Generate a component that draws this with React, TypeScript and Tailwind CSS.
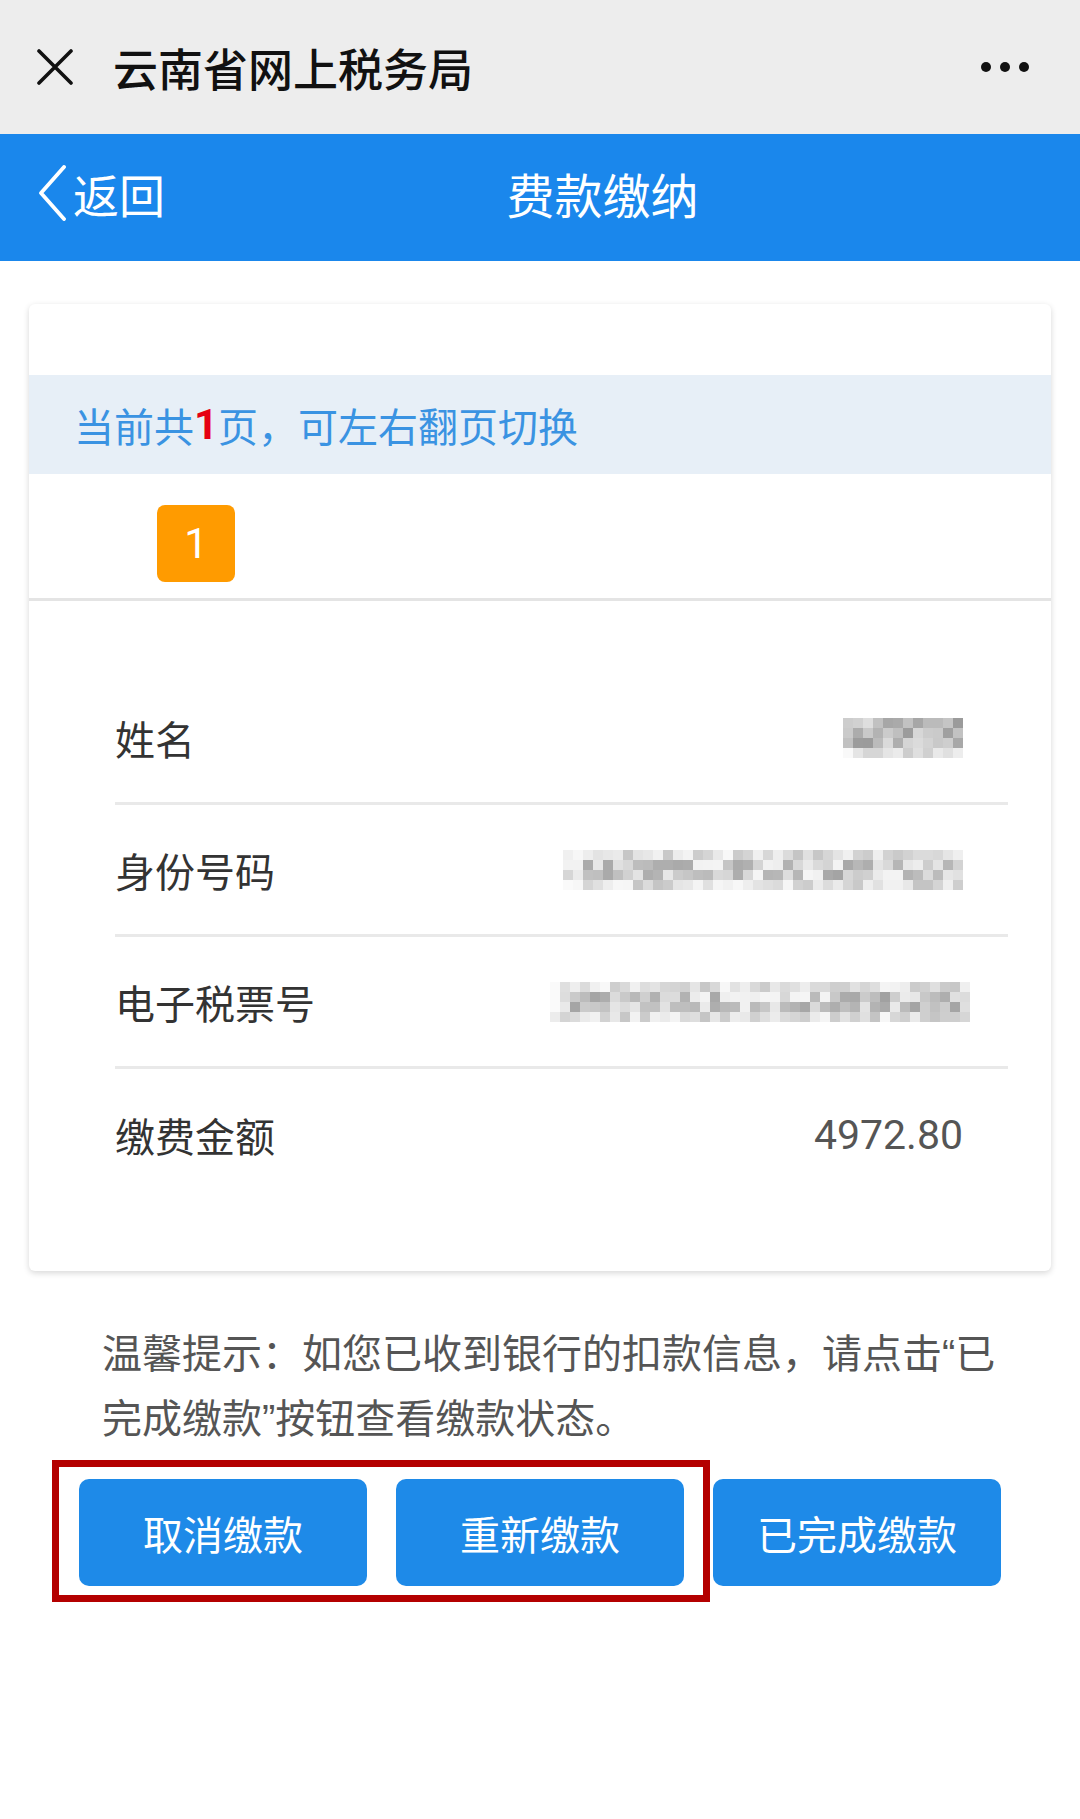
import React from "react";

function hash(i: number, j: number, s: number) {
  const x = Math.sin(i * 12.9898 + j * 78.233 + s * 37.719) * 43758.5453;
  return x - Math.floor(x);
}

function Mosaic({ cols, seed, dark }: { cols: number; seed: number; dark?: boolean }) {
  const rows = 4;
  const size = 10;
  const cells: React.ReactNode[] = [];
  for (let r = 0; r < rows; r++) {
    for (let c = 0; c < cols; c++) {
      const h = hash(c, r, seed);
      let g: number;
      if (dark) {
        if (r === 3) g = 200 + Math.round(h * 40);
        else g = 155 + Math.round(h * 70);
      } else {
        if (r === 0 || r === 3) g = 196 + Math.round(h * 52);
        else g = 160 + Math.round(h * 85);
      }
      if (c === 0) g = Math.min(250, g + 30);
      const col = `rgb(${g},${g},${g})`;
      cells.push(
        <rect key={`${r}-${c}`} x={c * size} y={r * size} width={size} height={size} fill={col} />
      );
    }
  }
  return (
    <svg width={cols * size} height={rows * size} viewBox={`0 0 ${cols * size} ${rows * size}`} className="block" style={{ filter: "blur(0.4px)" }}>
      {cells}
    </svg>
  );
}

function Row({ label, children, last }: { label: string; children: React.ReactNode; last?: boolean }) {
  return (
    <div
      className={
        "h-[132px] flex items-center justify-between pr-[45px] " +
        (last ? "" : "border-b-[3px] border-[#e9e9e9]")
      }
    >
      <div className="text-[40px] text-[#333333] leading-none">{label}</div>
      {children}
    </div>
  );
}

const Q = ({ c }: { c: string }) => (
  <span style={{ fontFamily: '"Liberation Sans", Arial, sans-serif' }}>{c}</span>
);

export default function App() {
  return (
    <div
      className="w-[1080px] min-h-[1819px] bg-white"
      style={{ fontFamily: '"Noto Sans CJK SC", "Noto Sans", sans-serif' }}
    >
      {/* WeChat top bar */}
      <div className="h-[134px] bg-[#ededed] flex items-center pl-[37px] pr-[51px]">
        <svg width="36" height="36" viewBox="0 0 36 36" className="block">
          <path d="M2 2 L34 34 M34 2 L2 34" stroke="#111" strokeWidth="3.6" strokeLinecap="round" />
        </svg>
        <div className="ml-[40px] text-[45px] leading-none font-medium text-[#111111]">云南省网上税务局</div>
        <div className="ml-auto flex items-center gap-[9px]">
          <div className="w-[10px] h-[10px] rounded-full bg-[#111]" />
          <div className="w-[10px] h-[10px] rounded-full bg-[#111]" />
          <div className="w-[10px] h-[10px] rounded-full bg-[#111]" />
        </div>
      </div>

      {/* Blue header */}
      <div className="h-[127px] bg-[#1a87ec] flex items-center pb-[10px] text-white">
        <div className="w-[165px] flex items-center pl-[38px]">
          <svg width="28" height="56" viewBox="0 0 28 56" className="block">
            <polyline points="26,2 3,28 26,54" fill="none" stroke="#fff" strokeWidth="3.8" strokeLinecap="round" strokeLinejoin="round" />
          </svg>
          <span className="ml-[7px] text-[46px] leading-none">返回</span>
        </div>
        <div className="flex-1 text-center pr-[40px] text-[48px] leading-none">费款缴纳</div>
      </div>

      {/* Card */}
      <div className="px-[29px] pt-[43px]">
        <div className="bg-white rounded-[6px] shadow-[0_2px_6px_rgba(0,0,0,0.16)] overflow-hidden">
          <div className="h-[71px]" />
          <div className="h-[99px] bg-[#e7eff7] flex items-center pl-[45px] text-[40px] leading-none text-[#3a93e2]">
            当前共<span className="text-[#e60012] font-bold text-[42px]" style={{ fontFamily: 'Roboto, "Noto Sans", sans-serif' }}>1</span>页，可左右翻页切换
          </div>
          <div className="h-[124px] pl-[128px] pt-[31px]">
            <div className="w-[78px] h-[77px] rounded-[8px] bg-[#ff9b00] flex items-center justify-center text-white text-[42px] leading-none" style={{ fontFamily: 'Roboto, "Noto Sans", sans-serif' }}>
              1
            </div>
          </div>
          <div className="h-[3px] bg-[#e4e4e4]" />
          <div className="pt-[72px] pb-[70px] pl-[86px] pr-[43px]">
            <Row label="姓名">
              <Mosaic cols={12} seed={3} dark />
            </Row>
            <Row label="身份号码">
              <Mosaic cols={40} seed={7} />
            </Row>
            <Row label="电子税票号">
              <div className="-mr-[7px]">
                <Mosaic cols={42} seed={11} />
              </div>
            </Row>
            <Row label="缴费金额" last>
              <div className="text-[41px] leading-none text-[#555555]" style={{ fontFamily: 'Roboto, "Noto Sans", sans-serif' }}>
                4972.80
              </div>
            </Row>
          </div>
        </div>
      </div>

      {/* Tip */}
      <div className="mt-[49px] pl-[102px] pr-[40px] text-[40px] leading-[62px] text-[#555555] whitespace-nowrap">
        温馨提示：如您已收到银行的扣款信息，请点击<Q c="“" />已
        <br />
        完成缴款<Q c="”" />按钮查看缴款状态。
      </div>

      {/* Buttons */}
      <div className="relative mt-[29px] pl-[79px] flex gap-[29px]">
        <div className="w-[288px] h-[107px] rounded-[10px] bg-[#1e8ae8] flex items-center justify-center text-white text-[40px] leading-none">取消缴款</div>
        <div className="w-[288px] h-[107px] rounded-[10px] bg-[#1e8ae8] flex items-center justify-center text-white text-[40px] leading-none">重新缴款</div>
        <div className="w-[288px] h-[107px] rounded-[10px] bg-[#1e8ae8] flex items-center justify-center text-white text-[40px] leading-none">已完成缴款</div>
        <div className="absolute left-[52px] top-[-19px] w-[658px] h-[142px] border-[7px] border-[#b40000] pointer-events-none" />
      </div>
    </div>
  );
}
